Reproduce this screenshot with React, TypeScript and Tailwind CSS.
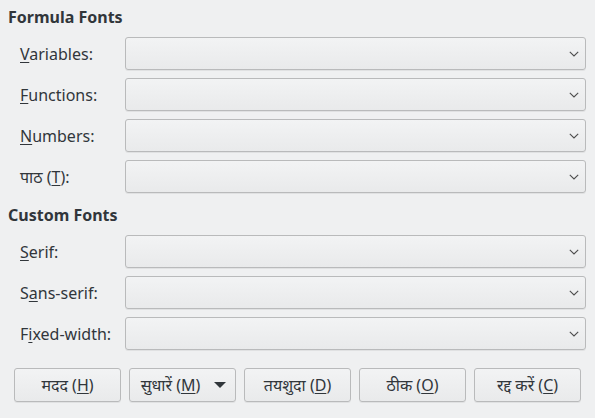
import React from "react";

type Row = { label: React.ReactNode };

function Mn({ children }: { children: React.ReactNode }) {
  return <span className="underline underline-offset-2 decoration-1">{children}</span>;
}

function Chevron() {
  return (
    <svg width="10" height="6" viewBox="0 0 10 6" className="text-[#4d4d4d]">
      <path d="M0.8 0.8 L5 5 L9.2 0.8" fill="none" stroke="currentColor" strokeWidth="1.1" />
    </svg>
  );
}

function Combo() {
  return (
    <div className="w-[461px] h-[33px] rounded-[3px] border border-[#b9babb] bg-gradient-to-b from-[#f2f3f4] to-[#e9eaeb] shadow-[0_1px_0_rgba(0,0,0,0.06)] flex items-center justify-end pr-[6px]">
      <Chevron />
    </div>
  );
}

function Section({ title, rows }: { title: string; rows: Row[] }) {
  return (
    <div className="flex flex-col">
      <div className="pl-[8px] h-[20px] flex items-center text-[16px] font-bold text-[#31363b]">{title}</div>
      <div className="mt-[10px] flex flex-col gap-[8px] pl-[20px]">
        {rows.map((r, i) => (
          <div key={i} className="flex items-center">
            <div className="w-[105px] text-[16px] text-[#31363b]">{r.label}</div>
            <Combo />
          </div>
        ))}
      </div>
    </div>
  );
}

function Btn({ children }: { children: React.ReactNode }) {
  return (
    <div className="w-[107px] h-[34px] rounded-[3px] border border-[#b9babb] bg-gradient-to-b from-[#f2f3f4] to-[#e9eaeb] shadow-[0_1px_0_rgba(0,0,0,0.06)] flex items-center justify-center text-[16px] text-[#31363b]">
      {children}
    </div>
  );
}

export default function App() {
  const formula: Row[] = [
    { label: <><Mn>V</Mn>ariables:</> },
    { label: <><Mn>F</Mn>unctions:</> },
    { label: <><Mn>N</Mn>umbers:</> },
    { label: <>पाठ (<Mn>T</Mn>):</> },
  ];
  const custom: Row[] = [
    { label: <><Mn>S</Mn>erif:</> },
    { label: <>S<Mn>a</Mn>ns-serif:</> },
    { label: <>F<Mn>i</Mn>xed-width:</> },
  ];
  return (
    <div
      className="w-[595px] h-[418px] bg-[#eff0f1] overflow-hidden"
      style={{ fontFamily: '"Noto Sans", "Open Sans", sans-serif' }}
    >
      <div className="pt-[7px]">
        <Section title="Formula Fonts" rows={formula} />
      </div>
      <div className="mt-[12px]">
        <Section title="Custom Fonts" rows={custom} />
      </div>
      <div className="mt-[18px] pl-[14px] flex gap-[8px]">
        <Btn>
          मदद (<Mn>H</Mn>)
        </Btn>
        <Btn>
          <span className="flex items-center gap-[14px] pl-[2px]">
            <span>
              सुधारें (<Mn>M</Mn>)
            </span>
            <svg width="12" height="6" viewBox="0 0 12 6">
              <path d="M0 0 L12 0 L6 6 Z" fill="#31363b" />
            </svg>
          </span>
        </Btn>
        <Btn>
          तयशुदा (<Mn>D</Mn>)
        </Btn>
        <Btn>
          ठीक (<Mn>O</Mn>)
        </Btn>
        <Btn>
          रद्द करें (<Mn>C</Mn>)
        </Btn>
      </div>
    </div>
  );
}
